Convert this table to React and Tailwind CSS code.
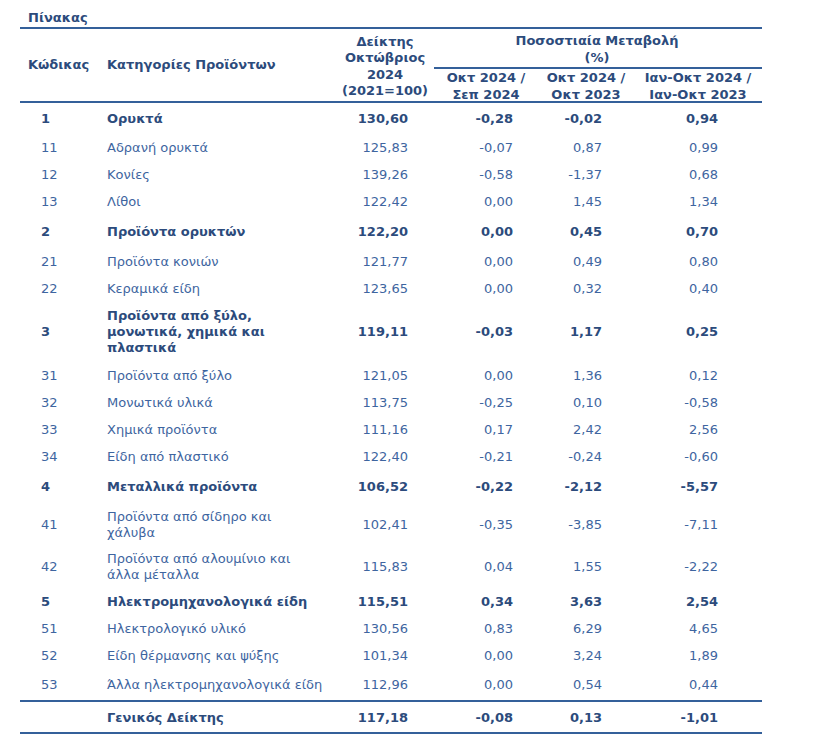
import React from 'react';

const rows = [
  { code: '1', name: ['Ορυκτά'], idx: '130,60', a: '-0,28', b: '-0,02', c: '0,94', bold: true, h: 'h-[31px]' },
  { code: '11', name: ['Αδρανή ορυκτά'], idx: '125,83', a: '-0,07', b: '0,87', c: '0,99' },
  { code: '12', name: ['Κονίες'], idx: '139,26', a: '-0,58', b: '-1,37', c: '0,68' },
  { code: '13', name: ['Λίθοι'], idx: '122,42', a: '0,00', b: '1,45', c: '1,34' },
  { code: '2', name: ['Προϊόντα ορυκτών'], idx: '122,20', a: '0,00', b: '0,45', c: '0,70', bold: true, h: 'h-[33px]' },
  { code: '21', name: ['Προϊόντα κονιών'], idx: '121,77', a: '0,00', b: '0,49', c: '0,80' },
  { code: '22', name: ['Κεραμικά είδη'], idx: '123,65', a: '0,00', b: '0,32', c: '0,40' },
  { code: '3', name: ['Προϊόντα από ξύλο,', 'μονωτικά, χημικά και', 'πλαστικά'], idx: '119,11', a: '-0,03', b: '1,17', c: '0,25', bold: true },
  { code: '31', name: ['Προϊόντα από ξύλο'], idx: '121,05', a: '0,00', b: '1,36', c: '0,12' },
  { code: '32', name: ['Μονωτικά υλικά'], idx: '113,75', a: '-0,25', b: '0,10', c: '-0,58' },
  { code: '33', name: ['Χημικά προϊόντα'], idx: '111,16', a: '0,17', b: '2,42', c: '2,56' },
  { code: '34', name: ['Είδη από πλαστικό'], idx: '122,40', a: '-0,21', b: '-0,24', c: '-0,60' },
  { code: '4', name: ['Μεταλλικά προϊόντα'], idx: '106,52', a: '-0,22', b: '-2,12', c: '-5,57', bold: true, h: 'h-[34px]' },
  { code: '41', name: ['Προϊόντα από σίδηρο και', 'χάλυβα'], idx: '102,41', a: '-0,35', b: '-3,85', c: '-7,11' },
  { code: '42', name: ['Προϊόντα από αλουμίνιο και', 'άλλα μέταλλα'], idx: '115,83', a: '0,04', b: '1,55', c: '-2,22' },
  { code: '5', name: ['Ηλεκτρομηχανολογικά είδη'], idx: '115,51', a: '0,34', b: '3,63', c: '2,54', bold: true, h: 'h-[27px]' },
  { code: '51', name: ['Ηλεκτρολογικό υλικό'], idx: '130,56', a: '0,83', b: '6,29', c: '4,65' },
  { code: '52', name: ['Είδη θέρμανσης και ψύξης'], idx: '101,34', a: '0,00', b: '3,24', c: '1,89' },
  { code: '53', name: ['Άλλα ηλεκτρομηχανολογικά είδη'], idx: '112,96', a: '0,00', b: '0,54', c: '0,44', h: 'h-[31px]' },
];

const cols = 'grid grid-cols-[80px_230px_102px_106px_96px_128px]';

function rowHeight(r) {
  if (r.h) return r.h;
  if (r.name.length === 3) return 'h-[60px]';
  if (r.name.length === 2) return 'h-[42px]';
  return r.bold ? 'h-[32px]' : 'h-[27px]';
}

function Row({ r }) {
  const tone = r.bold ? 'font-bold text-[#2c4b7c]' : 'text-[#3e65a0]';
  return (
    <div className={`${cols} ${rowHeight(r)} items-center ${tone}`}>
      <div className="pl-[21px]">{r.code}</div>
      <div className="pl-[7px] leading-[16px] whitespace-nowrap">
        {r.name.map((n, i) => (
          <div key={i}>{n}</div>
        ))}
      </div>
      <div className="text-right pr-[24px]">{r.idx}</div>
      <div className="text-right pr-[25px]">{r.a}</div>
      <div className="text-right pr-[32px]">{r.b}</div>
      <div className="text-right pr-[44px]">{r.c}</div>
    </div>
  );
}

export default function App() {
  return (
    <div className="w-[825px] h-[740px] bg-white font-['DejaVu_Sans',sans-serif] text-[13px]">
      <div className="ml-[20px] w-[742px]">
        <div className="h-[27px] pt-[10px] pl-[8px] leading-[16px] font-bold text-[#2c4b7c]">Πίνακας</div>

        {/* header */}
        <div className={`${cols} grid-rows-[38px_34px] border-y-2 border-[#34609a] font-bold text-[#2c4b7c] leading-[16.5px]`}>
          <div className="row-span-2 flex items-center pl-[8px] pt-[1px]">Κώδικας</div>
          <div className="row-span-2 flex items-center pl-[7px] pt-[1px]">Κατηγορίες Προϊόντων</div>
          <div className="row-span-2 flex flex-col justify-center items-center text-center pl-[8px] pt-[3px]">
            <div>Δείκτης</div>
            <div>Οκτώβριος</div>
            <div>2024</div>
            <div>(2021=100)</div>
          </div>
          <div className="col-span-3 flex flex-col justify-center items-center text-center pt-[3px]">
            <div>Ποσοστιαία Μεταβολή</div>
            <div>(%)</div>
          </div>
          <div className="border-t-2 border-[#34609a] ml-[2px] pt-[3px] flex flex-col justify-center items-center text-center">
            <div>Οκτ 2024 /</div>
            <div>Σεπ 2024</div>
          </div>
          <div className="border-t-2 border-[#34609a] pt-[3px] flex flex-col justify-center items-center text-center">
            <div>Οκτ 2024 /</div>
            <div>Οκτ 2023</div>
          </div>
          <div className="border-t-2 border-[#34609a] pt-[3px] flex flex-col justify-center items-center text-center">
            <div>Ιαν-Οκτ 2024 /</div>
            <div>Ιαν-Οκτ 2023</div>
          </div>
        </div>

        {/* body */}
        <div>
          {rows.map((r) => (
            <Row key={r.code} r={r} />
          ))}
        </div>

        {/* total */}
        <div className={`${cols} h-[34px] items-center border-y-2 border-[#34609a] font-bold text-[#2c4b7c]`}>
          <div />
          <div className="pl-[7px] pt-[2px]">Γενικός Δείκτης</div>
          <div className="text-right pr-[24px] pt-[2px]">117,18</div>
          <div className="text-right pr-[25px] pt-[2px]">-0,08</div>
          <div className="text-right pr-[32px] pt-[2px]">0,13</div>
          <div className="text-right pr-[44px] pt-[2px]">-1,01</div>
        </div>
      </div>
    </div>
  );
}
